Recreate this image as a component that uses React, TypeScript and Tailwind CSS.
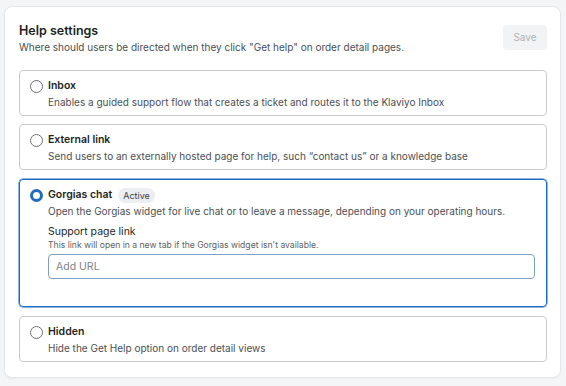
const options = [
  {
    id: "inbox",
    title: "Inbox",
    description:
      "Enables a guided support flow that creates a ticket and routes it to the Klaviyo Inbox",
  },
  {
    id: "external",
    title: "External link",
    description:
      "Send users to an externally hosted page for help, such \u201ccontact us\u201d or a knowledge base",
  },
  {
    id: "gorgias",
    title: "Gorgias chat",
    description:
      "Open the Gorgias widget for live chat or to leave a message, depending on your operating hours.",
  },
  {
    id: "hidden",
    title: "Hidden",
    description: "Hide the Get Help option on order detail views",
  },
];

const Radio = ({ checked }: { checked: boolean }) =>
  checked ? (
    <span className="mt-[2px] block h-[13px] w-[13px] shrink-0 rounded-full border-[3.5px] border-[#1f6bc1] bg-white" />
  ) : (
    <span className="mt-[2px] block h-[13px] w-[13px] shrink-0 rounded-full border border-[#6b7075] bg-white" />
  );

const App = () => {
  const selected = "gorgias";

  return (
    <div
      className="min-h-[386px] bg-[#f3f5f7] pl-[4px] pr-[5px] pt-[6px] pb-[8px]"
      style={{ fontFamily: "Inter, 'Noto Sans', sans-serif" }}
    >
      <div className="rounded-[8px] border border-[#e4e7ea] bg-white pl-[14px] pr-[13px] pt-[16px] pb-[15px] shadow-[0_1px_2px_rgba(0,0,0,0.04)]">
        <div className="flex items-start justify-between">
          <div>
            <h1 className="text-[12.5px] font-semibold leading-[16px] text-[#1d1f21]">
              Help settings
            </h1>
            <p className="text-[10px] leading-[16px] text-[#4a4f55]">
              Where should users be directed when they click "Get help" on order detail pages.
            </p>
          </div>
          <button className="mt-[2px] h-[25px] w-[44px] rounded-[4px] bg-[#f1f3f5] text-[10px] text-[#aeb3b8]">
            Save
          </button>
        </div>

        <div className="mt-[15px] flex flex-col gap-[8px]">
          {options.map((o) => {
            const isOn = o.id === selected;
            return (
              <div
                key={o.id}
                className={
                  isOn
                    ? "my-[1px] rounded-[4px] border border-[#1f6bc1] px-[10px] pt-[7px] pb-[27px] shadow-[0_0_0_0.5px_#1f6bc1]"
                    : "rounded-[4px] border border-[#c9ccd0] px-[10px] pt-[7px] pb-[5px]"
                }
              >
                <div className="flex gap-[5px]">
                  <Radio checked={isOn} />
                  <div className="min-w-0 flex-1">
                    <div className="flex items-center gap-[6px]">
                      <span className="text-[10.5px] font-semibold leading-[16px] text-[#1d1f21]">
                        {o.title}
                      </span>
                      {isOn && (
                        <span className="rounded-[8px] bg-[#eceef1] px-[5px] text-[9px] leading-[15px] text-[#3c4146]">
                          Active
                        </span>
                      )}
                    </div>
                    <p className="text-[10px] leading-[16px] text-[#4a4f55]">{o.description}</p>
                    {isOn && (
                      <div className="mt-[5px] pr-[1px]">
                        <div className="text-[10.5px] leading-[15px] text-[#1d1f21]">Support page link</div>
                        <div className="text-[8.6px] leading-[12px] text-[#5a5f65]">
                          This link will open in a new tab if the Gorgias widget isn't available.
                        </div>
                        <input
                          placeholder="Add URL"
                          className="mt-[3px] h-[25px] w-full rounded-[4px] border border-[#7f9fc4] px-[7px] text-[10.5px] text-[#1d1f21] outline-none placeholder:text-[#80858a]"
                        />
                      </div>
                    )}
                  </div>
                </div>
              </div>
            );
          })}
        </div>
      </div>
    </div>
  );
};

export default App;
